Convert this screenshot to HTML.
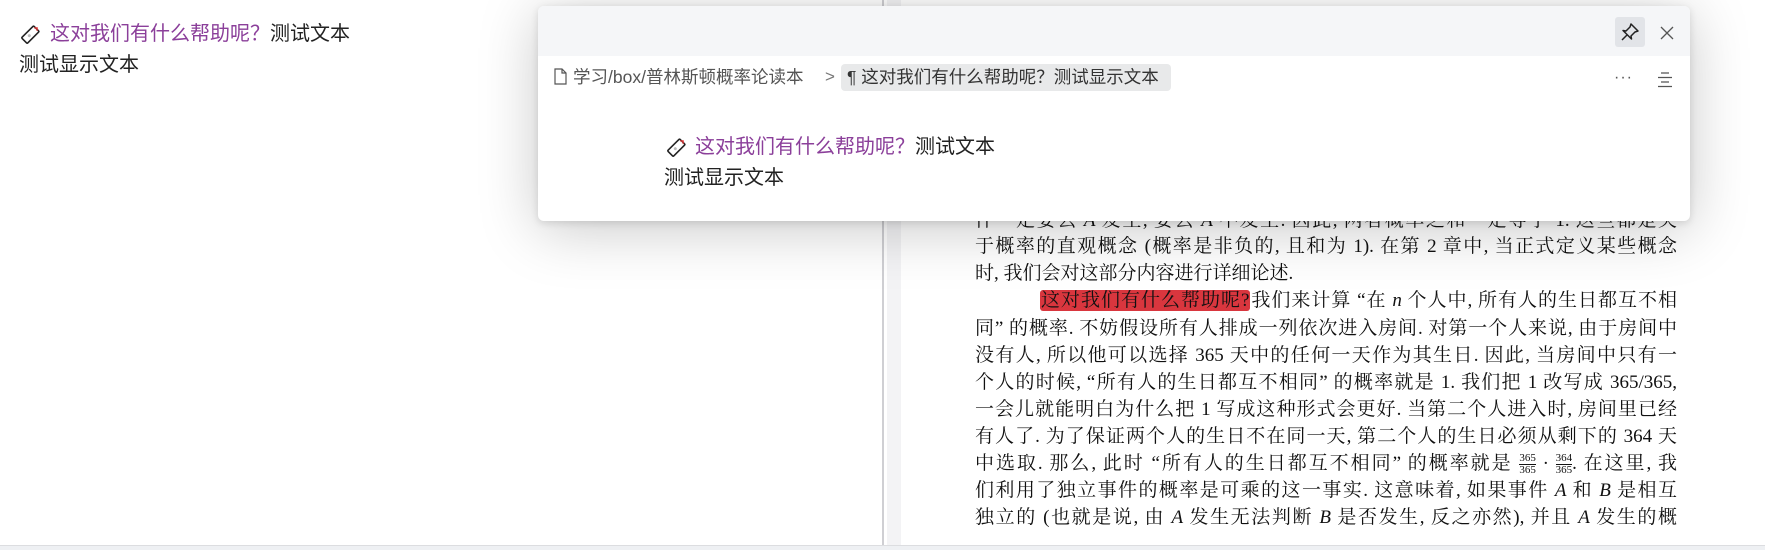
<!DOCTYPE html>
<html><head><meta charset="utf-8"><style>
*{margin:0;padding:0;box-sizing:border-box}
body{width:1765px;height:550px;overflow:hidden;background:#fff;position:relative;font-family:"Liberation Sans","Noto Sans CJK SC",sans-serif;color:#222}
.abs{position:absolute;white-space:nowrap}
.purple{color:#8b3f9a}
.t18{font-size:20px;line-height:26px}
.strip{position:absolute;left:887px;top:0;width:14px;height:546px;background:#f3f3f5}
.vl{position:absolute;left:882px;top:0;width:2px;height:546px;background:#cfcfd3}
.bottom{position:absolute;left:0;top:545px;width:1765px;height:5px;background:#eef0f3;border-top:1px solid #dcdde0}
.ln{position:absolute;left:975px;width:702px;height:27px;font-family:"Liberation Serif","Noto Serif CJK SC",serif;font-size:19px;line-height:27px;color:#111;text-align:justify;text-align-last:justify;white-space:nowrap;overflow:hidden}
.hl{background:#d9363e;border-radius:3px;color:#111;padding:0 1px}
i{font-family:"Liberation Serif",serif}
.frac{display:inline-block;vertical-align:middle;font-size:11px;line-height:11px;text-align:center}
.frac span{display:block}
.frac span:first-child{border-bottom:1px solid #111}
.pop{position:absolute;left:538px;top:6px;width:1152px;height:215px;background:#fff;border-radius:6px;box-shadow:0 8px 60px rgba(0,0,0,.22),0 2px 8px rgba(0,0,0,.12);overflow:hidden}
.hdr{position:absolute;left:0;top:0;width:100%;height:50px;background:#f5f6f8}
</style></head><body>
<div class="strip"></div><div class="vl"></div>

<svg class="abs" style="left:19px;top:24px" width="22" height="22" viewBox="0 0 22 22"><g transform="rotate(45 11 11)"><rect x="7" y="2" width="8" height="17" rx="1" fill="#fff" stroke="#222" stroke-width="1.6"/><circle cx="11" cy="12" r="1.5" fill="#bbb"/><path d="M9 3 L11 1 L13 3" fill="none" stroke="#d33" stroke-width="1.4"/></g></svg>
<div class="abs t18" style="left:50px;top:21px"><span class="purple">这对我们有什么帮助呢？</span>测试文本</div>
<div class="abs t18" style="left:19px;top:52px">测试显示文本</div>

<div class="ln" style="top:207px">件一定要么 <i>A</i> 发生, 要么 <i>A</i> 不发生. 因此, 两者概率之和一定等于 1. 这些都是关</div>
<div class="ln" style="top:233px">于概率的直观概念 (概率是非负的, 且和为 1). 在第 2 章中, 当正式定义某些概念</div>
<div class="ln" style="top:260px;text-align-last:left">时, 我们会对这部分内容进行详细论述.</div>
<div class="ln" style="top:287px;left:1040px;width:637px"><span class="hl">这对我们有什么帮助呢?</span>我们来计算 “在 <i>n</i> 个人中, 所有人的生日都互不相</div>
<div class="ln" style="top:315px">同” 的概率. 不妨假设所有人排成一列依次进入房间. 对第一个人来说, 由于房间中</div>
<div class="ln" style="top:342px">没有人, 所以他可以选择 365 天中的任何一天作为其生日. 因此, 当房间中只有一</div>
<div class="ln" style="top:369px">个人的时候, “所有人的生日都互不相同” 的概率就是 1. 我们把 1 改写成 365/365,</div>
<div class="ln" style="top:396px">一会儿就能明白为什么把 1 写成这种形式会更好. 当第二个人进入时, 房间里已经</div>
<div class="ln" style="top:423px">有人了. 为了保证两个人的生日不在同一天, 第二个人的生日必须从剩下的 364 天</div>
<div class="ln" style="top:450px">中选取. 那么, 此时 “所有人的生日都互不相同” 的概率就是 <span class="frac"><span>365</span><span>365</span></span> · <span class="frac"><span>364</span><span>365</span></span>. 在这里, 我</div>
<div class="ln" style="top:477px">们利用了独立事件的概率是可乘的这一事实. 这意味着, 如果事件 <i>A</i> 和 <i>B</i> 是相互</div>
<div class="ln" style="top:504px">独立的 (也就是说, 由 <i>A</i> 发生无法判断 <i>B</i> 是否发生, 反之亦然), 并且 <i>A</i> 发生的概</div>
<div class="bottom"></div>

<div class="pop">
 <div class="hdr"></div>
 <div class="abs" style="left:1077px;top:11px;width:30px;height:30px;background:#e2e4e8;border-radius:3px"></div>
 <svg class="abs" style="left:1082px;top:16px" width="20" height="20" viewBox="0 0 20 20"><path d="M11 2 L18 9 L15 10 L11 14 L11.5 17 L3 8.5 L6 9 L10 5 Z M7 13 L2 18" fill="none" stroke="#222" stroke-width="1.5" stroke-linejoin="round"/></svg>
 <svg class="abs" style="left:1122px;top:20px" width="14" height="14" viewBox="0 0 14 14"><path d="M1 1 L13 13 M13 1 L1 13" stroke="#555" stroke-width="1.3"/></svg>

 <svg class="abs" style="left:16px;top:62px" width="13" height="17" viewBox="0 0 13 17"><path d="M1 1 H8 L12 5 V16 H1 Z M8 1 V5 H12" fill="none" stroke="#555" stroke-width="1.2"/></svg>
 <div class="abs" style="left:35px;top:59px;font-size:17.5px;line-height:24px;color:#555">学习/box/普林斯顿概率论读本</div>
 <div class="abs" style="left:287px;top:59px;font-size:17px;line-height:24px;color:#777">&gt;</div>
 <div class="abs" style="left:303px;top:58px;width:330px;height:27px;background:#e8e9ea;border-radius:4px"></div>
 <div class="abs" style="left:309px;top:59px;font-size:17.5px;line-height:24px;color:#333">¶ 这对我们有什么帮助呢？测试显示文本</div>
 <div class="abs" style="left:1076px;top:63px;font-size:16px;color:#555;letter-spacing:1px">···</div>
 <svg class="abs" style="left:1118px;top:66px" width="18" height="16" viewBox="0 0 18 16"><path d="M5 1H13 M2 5.5H16 M5 10H13 M2 14.5H16" stroke="#555" stroke-width="1.2"/></svg>

 <svg class="abs" style="left:127px;top:131px" width="22" height="22" viewBox="0 0 22 22"><g transform="rotate(45 11 11)"><rect x="7" y="2" width="8" height="17" rx="1" fill="#fff" stroke="#222" stroke-width="1.6"/><circle cx="11" cy="12" r="1.5" fill="#bbb"/><path d="M9 3 L11 1 L13 3" fill="none" stroke="#d33" stroke-width="1.4"/></g></svg>
 <div class="abs t18" style="left:157px;top:128px"><span class="purple">这对我们有什么帮助呢？</span>测试文本</div>
 <div class="abs t18" style="left:126px;top:159px">测试显示文本</div>
</div>
</body></html>
